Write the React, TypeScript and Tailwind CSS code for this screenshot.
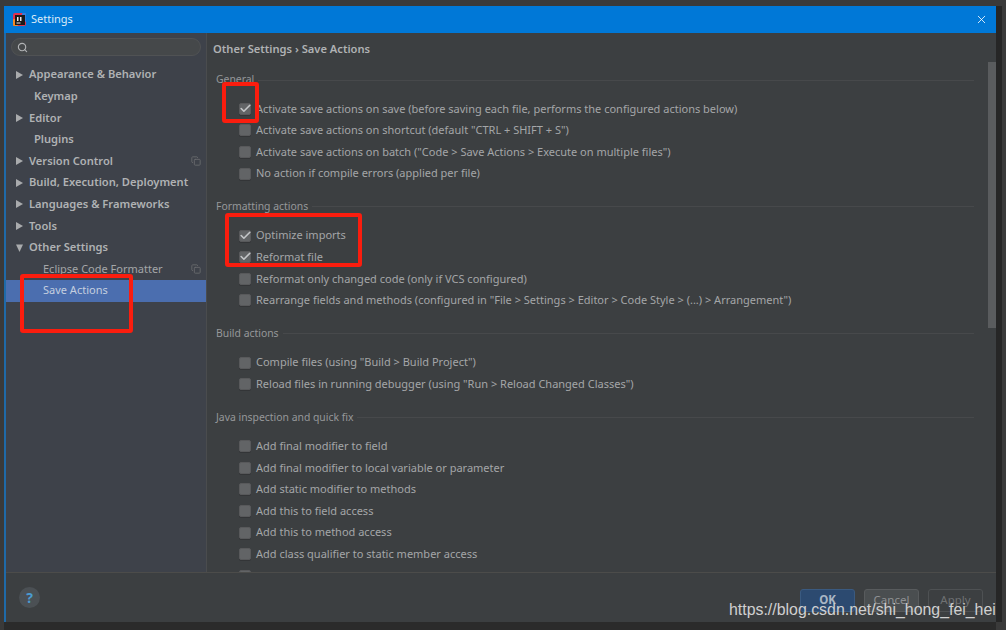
import React from "react";
import { Search, X, Check, Copy } from "lucide-react";

const font = "font-['Noto_Sans','Open_Sans',sans-serif]";

const navItems = [
  { label: "Appearance & Behavior", arrow: "right" },
  { label: "Keymap" },
  { label: "Editor", arrow: "right" },
  { label: "Plugins" },
  { label: "Version Control", arrow: "right", copy: true },
  { label: "Build, Execution, Deployment", arrow: "right" },
  { label: "Languages & Frameworks", arrow: "right" },
  { label: "Tools", arrow: "right" },
  { label: "Other Settings", arrow: "down" },
];

const sections = [
  {
    title: "General",
    top: "mt-[11px]",
    rows: [
      { label: "Activate save actions on save (before saving each file, performs the configured actions below)", on: true },
      { label: 'Activate save actions on shortcut (default "CTRL + SHIFT + S")' },
      { label: 'Activate save actions on batch ("Code > Save Actions > Execute on multiple files")' },
      { label: "No action if compile errors (applied per file)" },
    ],
  },
  {
    title: "Formatting actions",
    top: "mt-[15.5px]",
    rows: [
      { label: "Optimize imports", on: true },
      { label: "Reformat file", on: true },
      { label: "Reformat only changed code (only if VCS configured)" },
      { label: 'Rearrange fields and methods (configured in "File > Settings > Editor > Code Style > (...) > Arrangement")' },
    ],
  },
  {
    title: "Build actions",
    top: "mt-[15.5px]",
    rows: [
      { label: 'Compile files (using "Build > Build Project")' },
      { label: 'Reload files in running debugger (using "Run > Reload Changed Classes")' },
    ],
  },
  {
    title: "Java inspection and quick fix",
    top: "mt-[15.5px]",
    rows: [
      { label: "Add final modifier to field" },
      { label: "Add final modifier to local variable or parameter" },
      { label: "Add static modifier to methods" },
      { label: "Add this to field access" },
      { label: "Add this to method access" },
      { label: "Add class qualifier to static member access" },
      { label: "Add class qualifier to static member access outside declaring class" },
    ],
  },
];

function Arrow({ dir }: { dir?: string }) {
  if (!dir) return <span className="w-[13px] shrink-0" />;
  return (
    <svg className="w-[13px] h-[10px] shrink-0" viewBox="0 0 13 10">
      {dir === "right" ? <path d="M0 1 L7 5 L0 9 Z" fill="#a9abad" /> : <path d="M0 1.5 L7 1.5 L3.5 9 Z" fill="#a9abad" />}
    </svg>
  );
}

function NavRow({ item }: { item: { label: string; arrow?: string; copy?: boolean } }) {
  return (
    <div className="h-[21.6px] flex items-center pl-[10px] pr-[5px]">
      <Arrow dir={item.arrow} />
      <span className={`text-[11.15px] font-semibold text-[#b0b2b4] whitespace-nowrap ${item.arrow ? "" : "ml-[5px]"}`}>{item.label}</span>
      {item.copy && <Copy className="w-[10px] h-[10px] ml-auto text-[#6b6e70]" />}
    </div>
  );
}

function Row({ label, on }: { label: string; on?: boolean }) {
  return (
    <div className="h-[21.6px] flex items-center pl-[32px] shrink-0">
      <span className="relative w-[12px] h-[12px] rounded-[2px] bg-[#626466] border border-[#58595b] shadow-[0_1px_0_#333537] shrink-0">
        {on && <Check className="absolute -top-[2px] -left-[1px] w-[13px] h-[13px] text-[#c4c6c8]" strokeWidth={3} />}
      </span>
      <span className="ml-[5px] text-[11px] text-[#a4a6a8] whitespace-nowrap">{label}</span>
    </div>
  );
}

function SectionHead({ title, top }: { title: string; top: string }) {
  return (
    <div className={`flex items-center h-[14px] pl-[9px] pr-[22px] mb-[11px] shrink-0 ${top}`}>
      <span className="text-[10.4px] text-[#96989a] whitespace-nowrap">{title}</span>
      <span className="flex-1 h-px bg-[#47494b] ml-[4px]" />
    </div>
  );
}

export default function App() {
  return (
    <div className={`relative w-[1006px] h-[630px] overflow-hidden bg-[#3a3a3a] pt-[6px] pl-[4px] ${font}`}>
      <div className="w-[992px] h-[616px] flex flex-col bg-[#3c3f41] border-l-2 border-[#1f6aa8] shadow-[6px_0_0_#262626,0_8px_0_#2b2b2b]">
        {/* title bar */}
        <div className="h-[27px] bg-[#0078d7] flex items-center pl-[7px] pr-[8px] -ml-[2px] shrink-0">
          <svg className="w-[13px] h-[13px] ml-[2px]" viewBox="0 0 13 13">
            <rect x="0" y="0" width="13" height="13" rx="2" fill="#e0314f" />
            <rect x="0" y="6" width="5" height="7" rx="1" fill="#f08a24" />
            <rect x="9" y="0" width="4" height="9" rx="1" fill="#2f7fe0" />
            <rect x="2" y="2" width="10" height="10" fill="#1a1a1a" />
            <rect x="4" y="4" width="1.5" height="4" fill="#e8e8e8" />
            <rect x="7" y="4" width="1.5" height="4" fill="#e8e8e8" />
            <rect x="3.5" y="9.5" width="4" height="1" fill="#e8e8e8" />
          </svg>
          <span className="ml-[5px] text-[11px] text-[#dcebf7]">Settings</span>
          <X className="ml-auto w-[13px] h-[13px] text-white" strokeWidth={1.5} />
        </div>

        <div className="flex flex-1 min-h-0">
          {/* sidebar */}
          <div className="w-[201px] shrink-0 bg-[#3e424a] border-r border-[#4a4c4e] flex flex-col">
            <div className="mx-[5px] mt-[5px] h-[18px] rounded-full bg-[#45484a] border border-[#505254] flex items-center pl-[5px]">
              <Search className="w-[11px] h-[11px] text-[#b0b2b4]" strokeWidth={2.5} />
            </div>
            <div className="mt-[8px]">
              {navItems.map((item) => (
                <NavRow key={item.label} item={item} />
              ))}
            </div>
            <div className="h-[21.6px] flex items-center pl-[37px] pr-[5px]">
              <span className="text-[11px] text-[#a4a6a8] whitespace-nowrap">Eclipse Code Formatter</span>
              <Copy className="w-[10px] h-[10px] ml-auto text-[#6b6e70]" />
            </div>
            <div className="h-[21.6px] flex items-center pl-[37px] bg-[#4b6eaf]">
              <span className="text-[11px] text-[#c4cedf] whitespace-nowrap">Save Actions</span>
            </div>
          </div>

          {/* content */}
          <div className="flex-1 min-w-0 flex flex-col">
            <div className="h-[29px] pt-[7.5px] pl-[6px] shrink-0 text-[11.15px] font-semibold text-[#b0b2b4]">
              Other Settings › Save Actions
            </div>
            <div className="relative flex-1 min-h-0 overflow-hidden flex flex-col">
              {sections.map((s) => (
                <React.Fragment key={s.title}>
                  <SectionHead title={s.title} top={s.top} />
                  {s.rows.map((r) => (
                    <Row key={r.label} label={r.label} on={r.on} />
                  ))}
                </React.Fragment>
              ))}
              <div className="absolute right-0 top-0 w-[8px] h-[266px] bg-[#5a5c5e]" />
            </div>
          </div>
        </div>

        {/* footer */}
        <div className="h-[50px] shrink-0 border-t border-[#4c4c4a] flex items-center pl-[13px] pr-[13px] pb-[1px] bg-[#3c3f41]">
          <span className="w-[21px] h-[21px] rounded-full bg-[#4b5054] flex items-center justify-center text-[14px] font-bold text-[#4a9bd0]">?</span>
          <div className="ml-auto mt-[6px] flex gap-[9px]">
            <button className="w-[55px] h-[23px] rounded-[3px] bg-[#2c4a70] border border-[#3a5a80] text-[11.5px] font-bold text-[#aab6c4]">OK</button>
            <button className="w-[55px] h-[23px] rounded-[3px] bg-[#4a4e50] border border-[#585b5d] text-[11.5px] text-[#8f9193]">Cancel</button>
            <button className="w-[55px] h-[23px] rounded-[3px] border border-[#4e5153] text-[11.5px] text-[#6f7173]">Apply</button>
          </div>
        </div>
      </div>

      {/* annotation boxes */}
      <div className="absolute left-[222px] top-[82px] w-[37px] h-[41px] border-[4px] border-[#fb1d0e] rounded-[3px]" />
      <div className="absolute left-[225px] top-[213px] w-[137px] h-[54px] border-[4px] border-[#fb1d0e] rounded-[3px]" />
      <div className="absolute left-[20px] top-[274px] w-[113px] h-[59px] border-[4px] border-[#fb1d0e] rounded-[3px]" />

      {/* watermark */}
      <div className="absolute left-[729px] top-[600px] font-['Liberation_Sans',sans-serif] text-[15.9px] leading-[20px] text-[#d0d0d0] whitespace-nowrap">
        https://blog.csdn.net/shi_hong_fei_hei
      </div>
    </div>
  );
}
